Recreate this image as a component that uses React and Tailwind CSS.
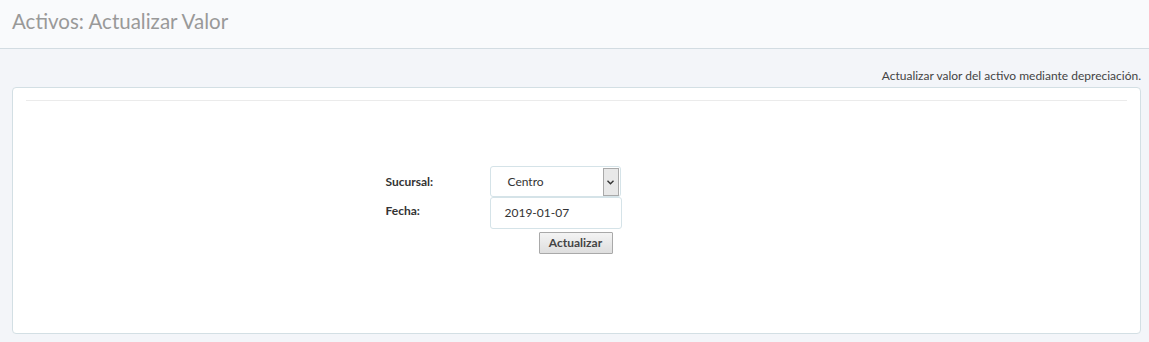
export default function App() {
  return (
    <div className="w-[1149px] h-[342px] bg-[#f3f5f9] text-[#333] overflow-hidden" style={{ fontFamily: 'Lato, "Open Sans", sans-serif' }}>
      <div className="h-[49px] bg-[#f9fafc] border-b border-[#d3dce2] flex items-center px-[12px] pb-[6px]">
        <h1 className="text-[20.5px] text-[#999]">Activos: Actualizar Valor</h1>
      </div>
      <div className="pl-[12px] pr-[8px] pt-[19px]">
        <p className="text-right text-[12px] text-[#444] leading-[16px]">
          Actualizar valor del activo mediante depreciación.
        </p>
        <div className="mt-[3px] h-[247px] bg-white border border-[#d3dfe4] rounded-[4px] px-[13px] pt-[12px]">
          <hr className="border-t border-[#ebebeb]" />
          <div className="flex justify-center pt-[65px] pr-[146px]">
            <div className="flex flex-col">
              <div className="flex items-center h-[31px]">
                <label className="w-[104px] text-[12px] font-bold text-[#333]">Sucursal:</label>
                <div className="relative w-[131px] h-[31px] border border-[#d5e3e8] rounded-[3px] flex items-center pl-[17px] text-[12px]">
                  Centro
                  <span className="absolute right-[1px] top-[1px] w-[16px] h-[28px] bg-[#e8e8e8] border border-[#a9a9a9] flex items-center justify-center">
                    <svg width="7" height="5" viewBox="0 0 7 5">
                      <path d="M0.5 0.8 L3.5 3.8 L6.5 0.8" fill="none" stroke="#333" strokeWidth="1.4" />
                    </svg>
                  </span>
                </div>
              </div>
              <div className="flex items-center h-[32px]">
                <label className="w-[104px] text-[12px] font-bold text-[#333] -mt-[5px]">Fecha:</label>
                <div className="w-[132px] h-[32px] border border-[#d5e3e8] rounded-[3px] flex items-center pl-[14px] text-[12px] -mt-[1px]">
                  2019-01-07
                </div>
              </div>
              <div className="flex pl-[153px] pt-[3px]">
                <button className="h-[22px] w-[74px] text-[12px] font-bold text-[#444] border border-[#a9a9a9] bg-gradient-to-b from-[#f4f4f4] to-[#dedede] rounded-[1px]">
                  Actualizar
                </button>
              </div>
            </div>
          </div>
        </div>
      </div>
    </div>
  );
}
